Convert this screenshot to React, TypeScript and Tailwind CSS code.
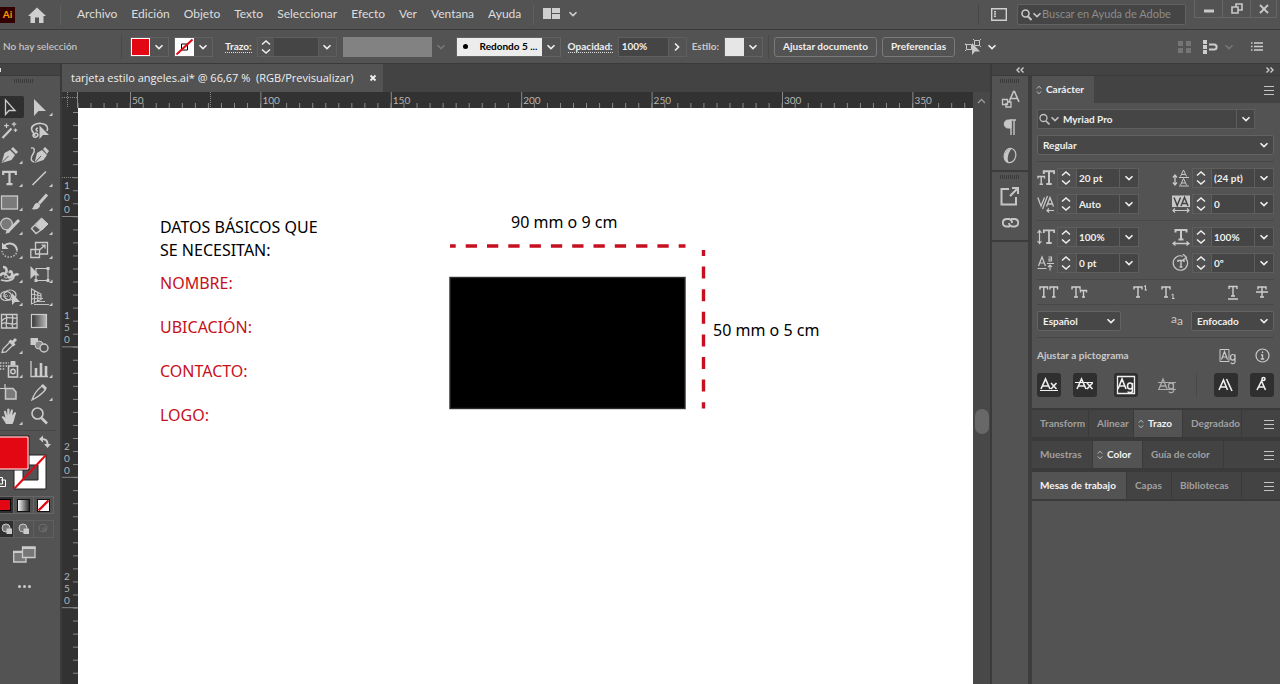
import React, {useEffect, useState} from 'react';

interface IconProps {
  children?: React.ReactNode;
  w?: number;
  h?: number;
  className?: string;
}

const Icon: React.FC<IconProps> = ({children, w = 20, h = 20, className = ''}) => (
  <svg
    width={w}
    height={h}
    viewBox={`0 0 ${w} ${h}`}
    fill="none"
    stroke="currentColor"
    aria-hidden="true"
    className={`shrink-0 ${className}`}
  >
    {children}
  </svg>
);

const Chevron: React.FC<{className?: string}> = ({className = ''}) => (
  <Icon w={10} h={8} className={className}>
    <path d="M1.5 2.2L5 5.6L8.5 2.2" strokeWidth="1.6"/>
  </Icon>
);

const Sorter: React.FC<{className?: string}> = ({className = ''}) => (
  <Icon w={6} h={10} className={className}>
    <path d="M0.8 3.6L3 1.2L5.2 3.6M0.8 6.4L3 8.8L5.2 6.4"/>
  </Icon>
);

const Grip = () => (
  <Icon w={20} h={4} className="text-[#3c3c3c]">
    <path d="M0 2H20" strokeWidth="4" strokeDasharray="1 1"/>
  </Icon>
);

const PanelMenu = () => (
  <button type="button" aria-label="Menú del panel" className="mr-[6px] ml-auto text-[#c4c4c4]">
    <Icon w={10} h={10}>
      <path d="M0 1.5H10M0 5.5H10M0 9.5H10"/>
    </Icon>
  </button>
);

const FIELD = 'flex h-5 items-stretch border border-[#5e5e5e] bg-[#454545]';

interface ToolType {
  name: string;
  more?: boolean;
  art: React.ReactNode;
}

const tools: ToolType[] = [
  {
    name: 'Selección',
    art: <path d="M5.5 5V19.5L9 15.5H15Z" strokeWidth="1.3"/>,
  },
  {
    name: 'Selección directa',
    more: true,
    art: <path d="M4 4V21L8.5 16H16Z" fill="currentColor" stroke="none"/>,
  },
  {
    name: 'Varita mágica',
    art: <>
      <path d="M2.5 19L11.5 9.5" strokeWidth="2.2"/>
      <path d="M6.5 4.5V9M4.2 6.7H8.8M14 3V7.5M11.8 5.2H16.2M15.5 9.5V13M13.7 11.2H17.3" strokeWidth="1.2"/>
    </>,
  },
  {
    name: 'Lazo',
    art: <>
      <path
        d="M4 14C1 12 0.5 8 4 6C8 3.5 15 4 17 7.5C18 9.5 17.5 11 17 12M4 14C1.8 16 3.5 19 6 18C9 17 8 13.5 5.5 14.2C4 14.6 4 16.5 5.5 16.3M8 12C5.5 12 5.5 9.5 8 9"
        strokeWidth="1.6"
      />
      <path d="M9.5 6.5V20L13 16H19Z" fill="currentColor" stroke="none"/>
    </>,
  },
  {
    name: 'Pluma',
    more: true,
    art: <>
      <path d="M1.5 20L4.5 10L10 7L15 12L11.5 17Z" fill="currentColor" stroke="none"/>
      <path d="M11 6L13 4L18 9L16 11Z" fill="currentColor" stroke="none"/>
      <path d="M2 19.5L8.5 13" stroke="#535353"/>
    </>,
  },
  {
    name: 'Curvatura',
    art: <>
      <path d="M4.5 20L7 10L12 7L17 12L13.5 17Z" fill="currentColor" stroke="none"/>
      <path d="M13 6L15 4L19 8L17 11Z" fill="currentColor" stroke="none"/>
      <path d="M5 19.5L11 13" stroke="#535353"/>
      <path d="M1 5C5 4 5 8 3 11C1 14 0 18 4 19" strokeWidth="1.4"/>
    </>,
  },
  {
    name: 'Texto',
    more: true,
    art: <path d="M3.2 9V5.8H15.8V9M9.5 5.8V18.2M6.5 18.2H12.5" strokeWidth="2.2"/>,
  },
  {
    name: 'Segmento de línea',
    more: true,
    art: <path d="M2.5 19L16 5.5" strokeWidth="1.6"/>,
  },
  {
    name: 'Rectángulo',
    more: true,
    art: <rect x="1.5" y="6" width="16" height="13" fill="#7a7a7a" strokeWidth="1.3"/>,
  },
  {
    name: 'Pincel',
    more: true,
    art: <>
      <path d="M9 13.5L17 4.5" strokeWidth="3"/>
      <path d="M1.5 19C4 18 3.5 14 6.5 13C9 12.5 11 15 9.5 17C8 19.5 4.5 20 1.5 19Z" fill="currentColor" stroke="none"/>
    </>,
  },
  {
    name: 'Shaper',
    more: true,
    art: <>
      <circle cx="6.5" cy="10" r="5.8" fill="#7a7a7a" strokeWidth="1.2"/>
      <path d="M7.5 18L19 6" strokeWidth="3"/>
      <path d="M5.5 20L7 15L10 18Z" fill="currentColor" stroke="none"/>
    </>,
  },
  {
    name: 'Borrador',
    more: true,
    art: <>
      <path d="M5.5 10L11.5 4L18 10L12 16Z" fill="currentColor"/>
      <path d="M5 11L1.5 14.5L6 19.5L11 16Z" strokeWidth="1.4"/>
    </>,
  },
  {
    name: 'Rotar',
    more: true,
    art: <>
      <path d="M4 8C8 3.5 16 5 17 12" strokeWidth="2"/>
      <path d="M2 4.5V11H8.5Z" fill="currentColor" stroke="none"/>
      <path d="M17 12C17 21 3 21.5 2 13" strokeWidth="1.3" strokeDasharray="1.5 1.5"/>
    </>,
  },
  {
    name: 'Escala',
    more: true,
    art: <>
      <path d="M5.5 4.5H17.5V16H5.5Z" strokeWidth="1.3"/>
      <path d="M0.8 11.5H9.5V19.5H0.8Z" strokeWidth="1.3"/>
      <path d="M9.5 12L14.5 7.5M11.5 7.2H15V10.5" strokeWidth="1.3"/>
    </>,
  },
  {
    name: 'Anchura',
    more: true,
    art: <>
      <path d="M3 5C7 5 7 9 6 11M0 14C2 10 5 11 7 14C9 17 13 15 12 11C11.5 8.5 9 9 10 11M12 14C14 16 15 10 18.5 13" strokeWidth="2.6"/>
      <path d="M1 18C6 19.5 12 19 14 15" strokeWidth="1.8"/>
      <circle cx="6" cy="14.5" r="1.6" fill="#535353"/>
    </>,
  },
  {
    name: 'Transformación libre',
    more: true,
    art: <>
      <path d="M6 6.5H18V18.5H6Z" strokeWidth="1.2"/>
      <path d="M16.5 5H19.5V8H16.5ZM16.5 17H19.5V20H16.5ZM4.5 17H7.5V20H4.5Z" fill="currentColor" stroke="none"/>
      <path d="M0.5 4V17L4 13.5H9.5Z" fill="currentColor" stroke="none"/>
    </>,
  },
  {
    name: 'Creador de formas',
    more: true,
    art: <>
      <ellipse cx="10" cy="10" rx="6" ry="5" strokeWidth="1.2"/>
      <ellipse cx="6" cy="11" rx="5.5" ry="4.5" strokeWidth="1.2"/>
      <path d="M1 11H11M6 7V15" strokeDasharray="1 1"/>
      <path d="M12 8V20L15 17H20Z" fill="currentColor" stroke="none"/>
    </>,
  },
  {
    name: 'Cuadrícula de perspectiva',
    more: true,
    art: <>
      <path d="M1.5 4V19L11 14.5V9ZM4.5 6V17.5M7.8 7.8V16M1.5 9L11 11M1.5 14L11 13" strokeWidth="1.1"/>
      <path d="M7 16.5H15M4 19.5H19M11 13.5H13" strokeWidth="0.9"/>
    </>,
  },
  {
    name: 'Malla',
    art: <>
      <path d="M1.5 5.5H17V19H1.5Z" strokeWidth="1.3"/>
      <path d="M1.5 12C6 6 12 10 17 9M1.5 15C6 11 11 18 17 14M6 5.5C9 10 4 14 7 19M12 5.5C15 10 10 14 13 19" strokeWidth="1.3"/>
    </>,
  },
  {
    name: 'Degradado',
    art: <rect x="1.5" y="5.5" width="15" height="13" fill="url(#toolFade)" strokeWidth="1.2"/>,
  },
  {
    name: 'Cuentagotas',
    more: true,
    art: <>
      <path d="M2 19.5L3 16L11 8L14 11L6 19Z" strokeWidth="1.3"/>
      <path d="M9.5 7.5L14.5 12.5M12 10L16 6" strokeWidth="3"/>
    </>,
  },
  {
    name: 'Fusión',
    art: <>
      <path d="M0.5 5H8V12H0.5Z" fill="currentColor" stroke="none"/>
      <circle cx="9" cy="12" r="4" fill="#8a8a8a"/>
      <circle cx="14" cy="15" r="4" fill="#535353" strokeWidth="1.4"/>
    </>,
  },
  {
    name: 'Rociar símbolos',
    more: true,
    art: <>
      <rect x="8.5" y="9" width="9" height="11" strokeWidth="1.6"/>
      <path d="M11 4.5H15V8H11Z" fill="currentColor"/>
      <circle cx="13" cy="14.5" r="2.2" strokeWidth="1.4"/>
      <path d="M0 6H9M0 9H7M0 12H5" strokeWidth="1.4" strokeDasharray="1.4 1.4"/>
    </>,
  },
  {
    name: 'Gráfica de columnas',
    more: true,
    art: <>
      <path d="M1 4V19.5H18" strokeWidth="1.3"/>
      <path d="M6 19V11M11 19V6M16 19V9" strokeWidth="2.6"/>
    </>,
  },
  {
    name: 'Mesa de trabajo',
    art: <>
      <path d="M5.5 8.5H13L16 12V19H5.5Z" fill="#7a7a7a" strokeWidth="1.5"/>
      <path d="M0 8.5H5M5 4V8" strokeWidth="1.2"/>
    </>,
  },
  {
    name: 'Sector',
    more: true,
    art: <>
      <path d="M2 20C4 14 8 9 12 6L15.5 9.5C12 14 8 17 2 20Z" strokeWidth="1.3"/>
      <path d="M11 5.5L13 4L17 8L15 10Z" fill="currentColor" stroke="none"/>
    </>,
  },
  {
    name: 'Mano',
    more: true,
    art: (
      <path
        d="M6 20C4.5 17 3 15 1.5 13C2.5 11.5 4 12 5.5 14L3.8 7.5C4.8 6.2 5.8 6.8 6.2 8L7.2 11.5V5.3C8 4.2 9.2 4.5 9.5 5.5V11L11 5.8C12 5 13 5.5 12.9 6.6L12.3 11.5L14.5 8.3C15.6 7.8 16.4 8.5 16 9.5C14.5 12.5 14.5 17 12.5 20Z"
        fill="currentColor"
        stroke="none"
      />
    ),
  },
  {
    name: 'Zoom',
    art: <>
      <circle cx="7.5" cy="9.5" r="5.5" strokeWidth="1.6"/>
      <path d="M11.5 14L17 19.5" strokeWidth="2.6"/>
    </>,
  },
];

const menus = ['Archivo', 'Edición', 'Objeto', 'Texto', 'Seleccionar', 'Efecto', 'Ver', 'Ventana', 'Ayuda'];

const MenuBar = () => (
  <header className="flex h-[30px] items-center border-b border-[#3a3a3a]">
    <div className="flex h-4 w-[15px] items-center justify-center bg-[#300] text-[10px] font-bold text-[#ff9a00]">Ai</div>
    <button type="button" aria-label="Inicio" className="ml-3 text-[#cfcfcf]">
      <Icon w={20} h={18}>
        <path d="M1 10L10 1.5L19 10H16.5V17H12V11.5H8V17H3.5V10Z" fill="currentColor" stroke="none"/>
      </Icon>
    </button>
    <div className="ml-[13px] h-5 w-px bg-[#5f5f5f]"/>
    <nav className="ml-4 flex gap-[14px] pb-[2px] text-xs leading-4 text-[#dedede]">
      {menus.map((menu) => (
        <button key={menu} type="button">{menu}</button>
      ))}
    </nav>
    <div className="ml-3 h-5 w-px bg-[#5f5f5f]"/>
    <button type="button" aria-label="Espacio de trabajo" className="ml-[9px] flex items-center gap-2 pb-[2px] text-[#cfcfcf]">
      <Icon w={17} h={11}>
        <path d="M0 0H8V11H0ZM9 0H17V5H9ZM9 6H17V11H9Z" fill="currentColor" stroke="none"/>
      </Icon>
      <Chevron/>
    </button>
    <div className="ml-auto h-5 w-px bg-[#454545]"/>
    <button type="button" aria-label="Organizar documentos" className="ml-3 text-[#d0d0d0]">
      <Icon w={16} h={13}>
        <path d="M0.7 0.7H15.3V12.3H0.7Z" strokeWidth="1.4"/>
        <path d="M4 3V10" strokeWidth="2" strokeDasharray="1.5 0.8"/>
      </Icon>
    </button>
    <label className="ml-[10px] flex h-[21px] w-[169px] items-center rounded-[2px] border border-[#626262] bg-[#454545] pl-[3px] text-[#c8c8c8]">
      <Icon w={11} h={12}>
        <circle cx="4.5" cy="4.5" r="3.5" strokeWidth="1.6"/>
        <path d="M7 7.5L10.5 11" strokeWidth="2"/>
      </Icon>
      <Chevron/>
      <input
        type="search"
        aria-label="Buscar en Ayuda de Adobe"
        placeholder="Buscar en Ayuda de Adobe"
        className="min-w-0 flex-1 text-[11px] outline-none placeholder:text-[#8c8c8c]"
      />
    </label>
    <div className="mr-[3px] ml-2 flex h-[18px] divide-x divide-[#666] self-start border border-t-0 border-[#666] text-[#c8c8c8]">
      <button type="button" aria-label="Minimizar" className="flex w-7 items-center justify-center">
        <Icon w={10} h={12}><path d="M0 8H10" strokeWidth="3"/></Icon>
      </button>
      <button type="button" aria-label="Restaurar" className="flex w-7 items-center justify-center">
        <Icon w={12} h={11}><path d="M5 3.5V1H11V7H7.5M1 4H7V10H1Z" strokeWidth="1.6"/></Icon>
      </button>
      <button type="button" aria-label="Cerrar" className="flex w-[25px] items-center justify-center">
        <Icon w={10} h={10}><path d="M1 1L9 9M9 1L1 9" strokeWidth="1.8"/></Icon>
      </button>
    </div>
  </header>
);

const DropButton: React.FC<{label: string; className?: string}> = ({label, className = ''}) => (
  <button
    type="button"
    aria-label={label}
    className={`flex w-[18px] shrink-0 items-center justify-center ${className}`}
  >
    <Chevron/>
  </button>
);

const Stepper = () => (
  <Icon w={10} h={18}>
    <path d="M1 6.5L5 3L9 6.5M1 11.5L5 15L9 11.5" strokeWidth="1.5"/>
  </Icon>
);

const ControlBar = () => (
  <div className="flex h-[34px] items-center border-b border-[#3a3a3a] text-[10px] font-bold whitespace-nowrap text-[#f0f0f0]">
    <span className="w-[121px] pl-[3px] font-medium text-[#cacaca]">No hay selección</span>
    <div className="h-6 w-px bg-[#484848]"/>
    <div className="ml-2 flex h-5 border border-[#626262]">
      <button type="button" aria-label="Relleno" className="w-[19px] border border-white bg-[#e30613]"/>
      <DropButton label="Opciones de relleno"/>
    </div>
    <div className="ml-[5px] flex h-5 border border-[#626262]">
      <button type="button" aria-label="Trazo" className="w-[19px] bg-white text-black">
        <Icon w={19} h={18}>
          <path d="M6.5 6H12.5V12H6.5Z"/>
          <path d="M1.5 16.5L17.5 1.5" stroke="#e30613" strokeWidth="2"/>
        </Icon>
      </button>
      <DropButton label="Opciones de trazo"/>
    </div>
    <label htmlFor="stroke-width" className="ml-3 border-b border-dotted border-[#ddd] leading-3">Trazo:</label>
    <div className={`ml-[5px] w-20 ${FIELD}`}>
      <button type="button" aria-label="Cambiar grosor" className="w-4 shrink-0 bg-[#535353] px-[3px]"><Stepper/></button>
      <input id="stroke-width" className="min-w-0 flex-1 px-1 outline-none"/>
      <DropButton label="Grosores" className="border-l border-[#5e5e5e] bg-[#535353]"/>
    </div>
    <div className="ml-[6px] flex h-5">
      <div className="w-[89px] bg-[#828282]"/>
      <DropButton label="Perfil de anchura" className="text-[#777]"/>
    </div>
    <div className="ml-[6px] flex h-5 border border-[#626262]">
      <button type="button" className="flex w-[85px] items-center bg-[#ececec] pl-[6px] text-black">
        <span className="mr-3 size-[5px] shrink-0 rounded-full bg-black"/>
        Redondo 5 ...
      </button>
      <DropButton label="Pinceles"/>
    </div>
    <label htmlFor="opacity" className="ml-[7px] border-b border-dotted border-[#ddd] leading-3">Opacidad:</label>
    <div className={`ml-[5px] w-[69px] ${FIELD}`}>
      <input id="opacity" defaultValue="100%" className="min-w-0 flex-1 pl-[3px] outline-none"/>
      <button type="button" aria-label="Ajustar opacidad" className="flex w-[18px] items-center justify-center border-l border-[#5e5e5e] bg-[#535353]">
        <Icon w={8} h={10}><path d="M2 1.5L5.6 5L2 8.5" strokeWidth="1.6"/></Icon>
      </button>
    </div>
    <span className="ml-[5px] text-[#cacaca]">Estilo:</span>
    <div className="ml-[5px] flex h-5 border border-[#626262]">
      <button type="button" aria-label="Estilo gráfico" className="w-[19px] bg-[#e6e6e6]"/>
      <DropButton label="Estilos gráficos"/>
    </div>
    <div className="ml-[5px] h-6 w-px bg-[#484848]"/>
    <button type="button" className="ml-[5px] h-5 w-[103px] rounded-[3px] border border-[#7a7a7a]">
      Ajustar documento
    </button>
    <button type="button" className="ml-[5px] h-5 w-[73px] rounded-[3px] border border-[#7a7a7a]">
      Preferencias
    </button>
    <button type="button" aria-label="Seleccionar objetos similares" className="ml-[10px] flex items-center gap-[6px]">
      <Icon w={16} h={17} className="text-[#c8c8c8]">
        <path d="M1.5 6.5H6.5V11.5H1.5ZM9.5 2.5H14.5V7.5H9.5ZM0 5V6.5H1.5M0 13L1.5 11.5M8 1L9.5 2.5M16 1L14.5 2.5M16 9L14.5 7.5"/>
        <path d="M7 5V17L10 13.5H15Z" fill="currentColor" stroke="none"/>
      </Icon>
      <Chevron/>
    </button>
    <div className="ml-auto flex items-center pr-[17px]">
      <Icon w={13} h={12} className="text-[#757575]">
        <path d="M0 0H5V5H0ZM8 0H13V5H8ZM0 7H5V12H0ZM8 7H13V12H8Z" fill="currentColor" stroke="none"/>
      </Icon>
      <button type="button" aria-label="Ajustar a píxel" className="ml-3 flex items-center gap-[6px] text-[#cdcdcd]">
        <Icon w={15} h={14}>
          <path d="M0 0H4V4H0ZM0 5H4V9H0ZM0 10H4V14H0Z" fill="currentColor" stroke="none"/>
          <path d="M6 4.5H11C14.5 4.5 14.5 9.5 11 9.5H6" strokeWidth="2"/>
        </Icon>
        <Chevron className="text-[#777]"/>
      </button>
      <button type="button" aria-label="Menú de control" className="ml-[17px] text-[#cdcdcd]">
        <Icon w={12} h={9}>
          <path d="M3 1H12M3 4.5H12M3 8H12M0 1H1.5M0 4.5H1.5M0 8H1.5" strokeWidth="1.3"/>
        </Icon>
      </button>
    </div>
  </div>
);

const Toolbox = () => {
  const [active, setActive] = useState('Selección');

  return (
    <aside className="flex w-[62px] shrink-0 flex-col border-r-2 border-[#3a3a3a] text-[#cbcbcb]">
      <div className="h-3 border-b border-[#3a3a3a] bg-[#434343]">
        <div className="mt-1 h-1 w-px bg-[#ddd]"/>
      </div>
      <div className="flex h-5 pt-[3px] pl-[14px]"><Grip/></div>
      <svg width="0" height="0" className="absolute" aria-hidden="true">
        <linearGradient id="toolFade">
          <stop offset="0" stopColor="#333"/>
          <stop offset="1" stopColor="#bbb"/>
        </linearGradient>
        <linearGradient id="swatchFade">
          <stop offset="0" stopColor="#fff"/>
          <stop offset="1" stopColor="#222"/>
        </linearGradient>
      </svg>
      <div className="grid h-[333px] grid-cols-[30px_30px] grid-rows-14">
        {tools.map((tool) => (
          <button
            key={tool.name}
            type="button"
            aria-label={tool.name}
            onClick={() => setActive(tool.name)}
            className={`flex h-[22px] w-6 items-center rounded-r-[2px] ${active === tool.name ? 'bg-[#2f2f2f]' : ''}`}
          >
            <Icon w={24} h={24}>
              {tool.art}
              {tool.more && <path d="M22.5 17.5V21H19Z" fill="currentColor" stroke="none"/>}
            </Icon>
          </button>
        ))}
      </div>
      <div className="mt-px mr-1 h-px bg-[#484848]"/>
      <Icon w={56} h={61} className="mt-1">
        <path d="M14 20H46V54H14Z" fill="#fff" stroke="#222"/>
        <path d="M23 30H38V45H23Z" fill="#535353" stroke="#222"/>
        <path d="M14.5 53.5L45.5 20.5" stroke="#e30613" strokeWidth="2"/>
        <path d="M-1 1H29V35H-1Z" fill="#e30613" stroke="#222"/>
        <path d="M-1 2H28V34H-1Z" stroke="#fff"/>
        <path d="M42 4C46 4 47.5 6 47.5 9" strokeWidth="2"/>
        <path d="M39 4L43 0.5V7.5ZM47.5 13L44 9H51Z" fill="currentColor" stroke="none"/>
        <path d="M-2 42.5H2.5V49H-2M1 45H5.5V51.5H-1" stroke="#fff"/>
      </Icon>
      <div className="flex">
        <button type="button" aria-label="Color" className="flex h-[18px] w-[14px] items-center border border-l-0 border-[#666] bg-[#2f2f2f]">
          <span className="h-3 w-[11px] border border-l-0 border-black bg-[#e30613]"/>
        </button>
        <button type="button" aria-label="Degradado" className="flex h-[18px] w-5 items-center justify-center border border-l-0 border-[#666]">
          <Icon w={13} h={13}><rect x="0.5" y="0.5" width="12" height="12" fill="url(#swatchFade)" stroke="#111"/></Icon>
        </button>
        <button type="button" aria-label="Ninguno" className="flex h-[18px] w-5 items-center justify-center border border-l-0 border-[#666]">
          <Icon w={13} h={13}>
            <rect x="0.5" y="0.5" width="12" height="12" fill="#fff" stroke="#111"/>
            <path d="M1.5 11.5L11.5 1.5" stroke="#e30613" strokeWidth="2.4"/>
          </Icon>
        </button>
      </div>
      <div className="mt-[6px] flex">
        {['Dibujo normal', 'Dibujar detrás', 'Dibujar dentro'].map((mode, index) => (
          <button
            key={mode}
            type="button"
            aria-label={mode}
            className={`flex h-[18px] items-center justify-center border border-l-0 border-[#606060] ${index === 0 ? 'w-[14px] bg-[#2f2f2f]' : 'w-5'} ${index === 2 ? 'text-[#6c6c6c]' : ''}`}
          >
            <Icon w={12} h={12}>
              <circle cx="5" cy="5" r="4" fill={index === 2 ? 'none' : '#777'}/>
              {index === 2
                ? <path d="M5 5H7.5V7.5H5Z"/>
                : <path d="M5.5 5.5H11V11H5.5Z" fill="currentColor" stroke="none"/>}
            </Icon>
          </button>
        ))}
      </div>
      <button type="button" aria-label="Modo de pantalla" className="mt-2 ml-[13px] w-[23px]">
        <Icon w={23} h={17}>
          <path d="M0.7 5.5H13V16H0.7Z" fill="#777" strokeWidth="1.3"/>
          <path d="M9.5 1H22V11.5H9.5Z" fill="#777" strokeWidth="1.3"/>
          <path d="M9 2H22.5M0 6H9" strokeWidth="2"/>
        </Icon>
      </button>
      <button type="button" aria-label="Editar barra de herramientas" className="mt-[22px] ml-[18px] flex gap-[2px]">
        <span className="size-[3px] rounded-full bg-[#cbcbcb]"/>
        <span className="size-[3px] rounded-full bg-[#cbcbcb]"/>
        <span className="size-[3px] rounded-full bg-[#cbcbcb]"/>
      </button>
    </aside>
  );
};

// ruler scale: 50 mm of the document are 130.4 px on screen at 66,67 %
const STEP = 130.4;

// space taken by the bars and panels around the canvas
const SIDE_SPACE = 385;
const TOP_SPACE = 108;

const useCanvasSize = () => {
  const [size, setSize] = useState({width: window.innerWidth - SIDE_SPACE, height: window.innerHeight - TOP_SPACE});

  useEffect(() => {
    const onResize = () => setSize({
      width: window.innerWidth - SIDE_SPACE,
      height: window.innerHeight - TOP_SPACE,
    });
    window.addEventListener('resize', onResize);
    return () => window.removeEventListener('resize', onResize);
  }, []);

  return size;
};

const range = (length: number) => Array.from({length: Math.max(0, Math.floor(length))}, (_, i) => i);

const TopRuler: React.FC<{width: number}> = ({width}) => (
  <svg className="h-4 min-w-0 flex-1 bg-[#323232] text-[10px]" stroke="#8a8a8a" aria-hidden="true">
    {range((width * 10) / STEP + 1).map((i) => <path key={i} d={`M${(i * STEP) / 10} 11V16`}/>)}
    {range((width - 75) / STEP + 1).map((i) => (
      <g key={i}>
        <path d={`M${52.5 + i * STEP} 0V16`}/>
        <text x={54 + i * STEP} y="12" fill="#b5b5b5" stroke="none">{50 + i * 50}</text>
      </g>
    ))}
    <path d="M132.5 0V16" strokeDasharray="1 1"/>
  </svg>
);

const SideRuler: React.FC<{height: number}> = ({height}) => (
  <svg className="h-full w-4 shrink-0 bg-[#323232] text-[10px]" stroke="#8a8a8a" aria-hidden="true">
    {range((height * 10) / STEP + 1).map((i) => <path key={i} d={`M11 ${4.5 + (i * STEP) / 10}H16`}/>)}
    {range((height - 108) / STEP + 1).map((i) => (
      <g key={i}>
        <path d={`M0 ${108.5 + i * STEP}H16`}/>
        {String(100 + i * 50).split('').map((digit, n) => (
          <text key={n} x="2" y={81 + n * 12 + i * STEP} fill="#b5b5b5" stroke="none">{digit}</text>
        ))}
      </g>
    ))}
    <path d="M0 69.5H16" strokeDasharray="1 1"/>
  </svg>
);

const Artwork = () => (
  <main className="relative min-w-0 flex-1 overflow-hidden bg-white font-['Noto_Sans','Open_Sans',sans-serif] text-base leading-[23px] whitespace-nowrap text-black">
    <p className="absolute top-[108px] left-[82px]">DATOS BÁSICOS QUE<br/>SE NECESITAN:</p>
    <p className="absolute top-[164px] left-[82px] text-[#c61020]">NOMBRE:</p>
    <p className="absolute top-[208px] left-[82px] text-[#c61020]">UBICACIÓN:</p>
    <p className="absolute top-[252px] left-[82px] text-[#c61020]">CONTACTO:</p>
    <p className="absolute top-[296px] left-[82px] text-[#c61020]">LOGO:</p>
    <p className="absolute top-[103px] left-[433px]">90 mm o 9 cm</p>
    <p className="absolute top-[211px] left-[635px]">50 mm o 5 cm</p>
    <svg className="absolute top-[136px] left-[371px]" width="258" height="166" aria-hidden="true">
      <rect x="1" y="33.5" width="235" height="131" fill="#000" stroke="#2b2b2b" strokeWidth="1.4"/>
      <path d="M1 2H236.5" stroke="#c61020" strokeWidth="3.4" strokeDasharray="11.3 10" strokeDashoffset="5.6"/>
      <path d="M254.5 6V164.5" stroke="#c61020" strokeWidth="3.4" strokeDasharray="12 10.6" strokeDashoffset="6"/>
    </svg>
  </main>
);

const Document = () => {
  const {width, height} = useCanvasSize();

  return (
    <section className="flex min-w-0 flex-1 flex-col bg-[#434343]">
      <div className="flex h-7 shrink-0">
        <div className="flex w-[321px] items-center bg-[#535353] pl-[9px] font-['Open_Sans','Noto_Sans',sans-serif] text-[11px] font-medium text-[#f0f0f0]">
          <span className="flex-1 whitespace-pre">{'tarjeta estilo angeles.ai* @ 66,67 %  (RGB/Previsualizar)'}</span>
          <button type="button" aria-label="Cerrar documento" className="mr-[6px]">
            <Icon w={8} h={8}><path d="M1.5 1.5L6.5 6.5M6.5 1.5L1.5 6.5" strokeWidth="1.8"/></Icon>
          </button>
        </div>
      </div>
      <div className="flex min-h-0 flex-1">
        <div className="flex min-w-0 flex-1 flex-col">
          <div className="flex h-4 shrink-0">
            <Icon w={16} h={16} className="bg-[#323232] text-[#8a8a8a]">
              <path d="M5.5 0V16M0 5.5H16" strokeDasharray="1 1"/>
              <path d="M15.5 0V16"/>
            </Icon>
            <TopRuler width={width}/>
          </div>
          <div className="flex min-h-0 flex-1">
            <SideRuler height={height}/>
            <Artwork/>
          </div>
        </div>
        <div className="flex w-[17px] shrink-0 flex-col items-center bg-[#484848] pt-[6px] text-[#9a9a9a]">
          <Icon w={9} h={6}><path d="M1 5L4.5 1.5L8 5" strokeWidth="1.3"/></Icon>
          <div className="mt-[305px] h-[25px] w-[14px] rounded-full bg-[#686868]"/>
        </div>
      </div>
    </section>
  );
};

const IconStrip = () => (
  <div className="flex w-9 shrink-0 flex-col text-[#c6c6c6]">
    <div className="flex h-24 flex-col items-center border-b-2 border-[#3c3c3c] pt-[3px]">
      <Grip/>
      <div className="mt-[7px] flex flex-col items-center gap-[11px]">
        <button type="button" aria-label="Estilos de carácter">
          <Icon w={19} h={18}>
            <path d="M8 12L12.5 1.5H13.5L18 12M9.5 8.5H16.5" strokeWidth="1.6"/>
            <path d="M1.5 9.5H6.5V14.5H1.5ZM5 13V17H10V12H7" strokeWidth="1.3"/>
          </Icon>
        </button>
        <button type="button" aria-label="Párrafo">
          <Icon w={14} h={17}>
            <path d="M8 1H5C0 1 0 9 5 9H8Z" fill="currentColor"/>
            <path d="M8 1V16M11 1V16M7 1H13" strokeWidth="1.4"/>
          </Icon>
        </button>
        <button type="button" aria-label="OpenType">
          <Icon w={14} h={17}>
            <ellipse cx="7" cy="8.5" rx="5.8" ry="7.2" transform="rotate(14 7 8.5)" strokeWidth="1.2"/>
            <path d="M9 1.2C3 2 -0.5 9 2 13.5C3 15.3 4.5 16 6 15.8C3 12 6 4 9 1.2Z" fill="currentColor" stroke="none"/>
          </Icon>
        </button>
      </div>
    </div>
    <div className="flex h-[70px] flex-col items-center border-b-2 border-[#3c3c3c] pt-[3px]">
      <Grip/>
      <div className="mt-[7px] flex flex-col items-center gap-[11px]">
        <button type="button" aria-label="Exportar recursos">
          <Icon w={20} h={20}>
            <path d="M9 3H1.5V18.5H16V11" strokeWidth="2"/>
            <path d="M10 10L17.5 2.5M12 2H18V8" strokeWidth="2"/>
          </Icon>
        </button>
        <button type="button" aria-label="Vínculos">
          <Icon w={19} h={12}>
            <path d="M9 9.5H5A3.8 3.8 0 0 1 5 2H8A3.8 3.8 0 0 1 11 6M10 2H14A3.8 3.8 0 0 1 14 9.5H11A3.8 3.8 0 0 1 8 6" strokeWidth="1.8"/>
          </Icon>
        </button>
      </div>
    </div>
  </div>
);

interface ComboProps {
  id: string;
  label: string;
  value: string;
  art: React.ReactNode;
}

const Combo: React.FC<ComboProps> = ({id, label, value, art}) => (
  <div className="flex items-center gap-[2px]">
    <label htmlFor={id} aria-label={label} className="text-[#c8c8c8]">
      <Icon w={18} h={18}>{art}</Icon>
    </label>
    <div className={`w-[82px] ${FIELD}`}>
      <button type="button" aria-label={`Cambiar ${label}`} className="w-[18px] shrink-0 bg-[#505050] px-[3px]"><Stepper/></button>
      <input id={id} defaultValue={value} className="min-w-0 flex-1 border-x border-[#5e5e5e] pl-[2px] outline-none"/>
      <DropButton label={`Valores de ${label}`}/>
    </div>
  </div>
);

const combos: ComboProps[][] = [
  [
    {
      id: 'font-size', label: 'Tamaño de fuente', value: '20 pt',
      art: <>
        <path d="M6.8 5V2.2H17.2V5M12 2.2V15M9.3 15H14.7" strokeWidth="2"/>
        <path d="M1 9.5V7.5H7.5V9.5M4.2 7.5V15.2M2.5 15.2H6" strokeWidth="1.4"/>
      </>,
    },
    {
      id: 'leading', label: 'Interlineado', value: '(24 pt)',
      art: <>
        <path d="M8.5 7.5L11.5 1L14.5 7.5M9.5 5.5H13.5M7 8.5H17M8.5 16L11.5 9.5L14.5 16M9.5 14H13.5M7 17H17"/>
        <path d="M3 7V15M1 8.5L3 6L5 8.5M1 13.5L3 16L5 13.5" strokeWidth="1.3"/>
      </>,
    },
  ],
  [
    {
      id: 'kerning', label: 'Kerning', value: 'Auto',
      art: <>
        <path d="M0.8 2.5L4 11L7.5 2.5M5.5 14L10.5 1M9.5 11.5L13 2.5L16.5 11.5M10.5 9H15.5" strokeWidth="1.3"/>
        <path d="M17 15.5H10M12 13.5L10 15.5L12 17.5" strokeWidth="1.2"/>
      </>,
    },
    {
      id: 'tracking', label: 'Tracking', value: '0',
      art: <>
        <path d="M0 0.5H18V12H0Z" fill="currentColor" stroke="none"/>
        <path d="M2 2.5L5.2 10.5L8.5 2.5M9 11L12.5 2.5L16 11M10.5 8.5H14.5" stroke="#444" strokeWidth="1.5"/>
        <path d="M1 15.5H17M3 13.5L1 15.5L3 17.5M15 13.5L17 15.5L15 17.5" strokeWidth="1.2"/>
      </>,
    },
  ],
  [
    {
      id: 'vertical-scale', label: 'Escala vertical', value: '100%',
      art: <>
        <path d="M6.8 5V2.4H17.2V5M12 2.4V15M9.3 15H14.7" strokeWidth="1.8"/>
        <path d="M2.5 3V15M0.5 5L2.5 2.5L4.5 5M0.5 13L2.5 15.5L4.5 13" strokeWidth="1.2"/>
      </>,
    },
    {
      id: 'horizontal-scale', label: 'Escala horizontal', value: '100%',
      art: <>
        <path d="M3.5 4.5V2H14.5V4.5M9 2V11.5M6.5 11.5H11.5" strokeWidth="2"/>
        <path d="M1 15.5H17M3.5 13.5L1 15.5L3.5 17.5M14.5 13.5L17 15.5L14.5 17.5" strokeWidth="1.3"/>
      </>,
    },
  ],
  [
    {
      id: 'baseline', label: 'Desplazamiento vertical', value: '0 pt',
      art: <>
        <path d="M1.5 12L5 3L8.5 12M3 9H7M0.5 14.5H9.5" strokeWidth="1.2"/>
        <path d="M11.5 3H14.5V7H12V5H14.5M10 9.5H17M13 16.5V11M11 13L13 11L15 13" strokeWidth="1.1"/>
      </>,
    },
    {
      id: 'rotation', label: 'Rotación de caracteres', value: '0º',
      art: <>
        <path d="M14 4.5A7.2 7.2 0 1 1 11 2.3M11 0L14.5 3.5L11 6" strokeWidth="1.2"/>
        <path d="M6 8V6.5H12V8M9 6.5V13M7.5 13H10.5" strokeWidth="1.4"/>
      </>,
    },
  ],
];

const Rule = () => <hr className="border-[#484848]"/>;

const GlyphButton: React.FC<{label: string; dark?: boolean; children: React.ReactNode}> = ({label, dark, children}) => (
  <button
    type="button"
    aria-label={label}
    className={`flex size-6 items-center justify-center rounded-[3px] ${dark ? 'bg-[#2f2f2f] text-[#f0f0f0]' : 'text-[#aaa]'}`}
  >
    <Icon w={20} h={20}>{children}</Icon>
  </button>
);

const A_X = 'M2 14L6.5 4L11 14M3.5 11H9.5M12 8L17.5 14M17.5 8L12 14';
const A_G = 'M2 14L6 4L10 14M3.5 11H8.5M16.5 8V16C16.5 18 12 18 12 16.5M16.5 11C16.5 7 11.5 7 11.5 11C11.5 15 16.5 15 16.5 11';

const Select: React.FC<{label: string; value: string; className: string}> = ({label, value, className}) => (
  <div className={`relative flex h-5 items-center rounded-[2px] border border-[#636363] bg-[#474747] ${className}`}>
    <select aria-label={label} className="size-full appearance-none pl-[5px] outline-none">
      <option>{value}</option>
    </select>
    <Chevron className="pointer-events-none absolute right-1"/>
  </div>
);

const CharacterPanel = () => (
  <section className="flex flex-col text-[10px] font-bold text-[#f0f0f0]">
    <div className="flex h-[27px] items-center bg-[#434343]">
      <button type="button" className="flex h-full w-[62px] items-center gap-1 bg-[#535353] pl-1">
        <Sorter className="text-[#bbb]"/>Carácter
      </button>
      <PanelMenu/>
    </div>
    <div className="flex flex-col pt-[6px] pr-[6px] pl-[5px]">
      <div className={`mr-[19px] ${FIELD}`}>
        <span className="flex items-center pl-px text-[#c0c0c0]">
          <Icon w={11} h={12}>
            <circle cx="4.5" cy="5" r="3.5" strokeWidth="1.3"/>
            <path d="M7 8L10.5 11.5" strokeWidth="1.6"/>
          </Icon>
          <Chevron/>
        </span>
        <input aria-label="Familia de fuentes" defaultValue="Myriad Pro" className="min-w-0 flex-1 pl-[3px] outline-none"/>
        <DropButton label="Familias" className="border-l border-[#5e5e5e]"/>
      </div>
      <Select label="Estilo de fuente" value="Regular" className="my-[6px]"/>
      <Rule/>
      {[combos.slice(0, 2), combos.slice(2)].map((group, index) => (
        <React.Fragment key={index}>
          <div className="flex flex-col gap-[6px] py-[6px]">
            {group.map((pair) => (
              <div key={pair[0].id} className="flex justify-between">
                {pair.map((combo) => <Combo key={combo.id} {...combo}/>)}
              </div>
            ))}
          </div>
          <Rule/>
        </React.Fragment>
      ))}
      <div className="flex h-6 items-center pr-[6px] pl-[2px] text-[#cfcfcf]">
        <button type="button" aria-label="Todo mayúsculas">
          <Icon w={20} h={16}>
            <path d="M1 5.5V3H8.5V5.5M4.8 3V13M3 13H6.5M11 5.5V3H18.5V5.5M14.8 3V13M13 13H16.5" strokeWidth="1.4"/>
          </Icon>
        </button>
        <button type="button" aria-label="Versalitas" className="ml-3">
          <Icon w={18} h={16}>
            <path d="M1 5.5V3H9V5.5M5 3V13M3 13H7M9.5 8.5V6.5H15.5V8.5M12.5 6.5V13M11 13H14" strokeWidth="1.4"/>
          </Icon>
        </button>
        <button type="button" aria-label="Superíndice" className="ml-auto">
          <Icon w={16} h={16}>
            <path d="M1 5.5V3H9V5.5M5 3V13M3 13H7" strokeWidth="1.4"/>
            <path d="M11 2.5L12.5 1.5V6M11.5 6H14"/>
          </Icon>
        </button>
        <button type="button" aria-label="Subíndice" className="ml-3">
          <Icon w={16} h={16}>
            <path d="M1 5.5V3H9V5.5M5 3V13M3 13H7" strokeWidth="1.4"/>
            <path d="M10.5 11L12 10V14.5M11 14.5H13.5"/>
          </Icon>
        </button>
        <button type="button" aria-label="Subrayado" className="ml-[50px]">
          <Icon w={12} h={16}>
            <path d="M2 5V2.5H10V5M6 2.5V12M4 12H8M1 15H11" strokeWidth="1.4"/>
          </Icon>
        </button>
        <button type="button" aria-label="Tachado" className="ml-[17px]">
          <Icon w={12} h={16}>
            <path d="M2 5.5V3H10V5.5M6 3V13M4 13H8M0 8H12" strokeWidth="1.4"/>
          </Icon>
        </button>
      </div>
      <Rule/>
      <div className="flex py-[6px]">
        <Select label="Idioma" value="Español" className="w-[84px]"/>
        <span className="mr-2 ml-auto flex text-xs font-normal text-[#c8c8c8]">
          <span className="leading-4">a</span>
          <span className="leading-5">a</span>
        </span>
        <Select label="Suavizado" value="Enfocado" className="w-[83px]"/>
      </div>
      <Rule/>
      <div className="flex h-[35px] items-center text-[#cacaca]">
        <span>Ajustar a pictograma</span>
        <button type="button" aria-label="Opciones de pictograma" className="ml-auto">
          <Icon w={18} h={18}>
            <path d="M1 2.5H10V14.5H1Z"/>
            <path d="M2.5 12.5L5.5 4.5L8.5 12.5M3.5 10H7.5M16 7.5V15C16 17 12 17 12 15.5M16 10.5C16 6.5 11.5 6.5 11.5 10.5C11.5 14 16 14 16 10.5" strokeWidth="1.2"/>
          </Icon>
        </button>
        <button type="button" aria-label="Información" className="mr-1 ml-[18px]">
          <Icon w={15} h={15}>
            <circle cx="7.5" cy="7.5" r="6.5" strokeWidth="1.2"/>
            <path d="M7.5 3.5V5M6 7H7.5V11M5.8 11H9.2" strokeWidth="1.3"/>
          </Icon>
        </button>
      </div>
      <div className="flex h-[35px] items-start">
        <GlyphButton label="Línea de base" dark>
          <path d={A_X} strokeWidth="1.6"/><path d="M1 15.5H19"/>
        </GlyphButton>
        <div className="w-3"/>
        <GlyphButton label="Altura x" dark>
          <path d={A_X} strokeWidth="1.6"/><path d="M0 7.5H18"/>
        </GlyphButton>
        <div className="w-[17px]"/>
        <GlyphButton label="Límites de pictograma" dark>
          <path d="M1.5 1.5H18.5V18.5H1.5Z" strokeWidth="1.3"/><path d={A_G} strokeWidth="1.6"/>
        </GlyphButton>
        <div className="w-[17px]"/>
        <GlyphButton label="Guías de proximidad">
          <path d={A_G} strokeWidth="1.3"/><path d="M1 7.5H19M1 14.5H19"/>
        </GlyphButton>
        <div className="mx-auto h-6 w-px bg-[#484848]"/>
        <GlyphButton label="Guías angulares" dark>
          <path d="M3 15L7.5 5L11.5 15M4.5 12H10M10.5 4L16 16" strokeWidth="1.6"/>
        </GlyphButton>
        <div className="w-3"/>
        <GlyphButton label="Punto de ancla" dark>
          <path d="M5 15L9.5 6L13.5 15M6.5 12H12M10 4C10 2 13 2 13 4C13 6 10 6 10 4" strokeWidth="1.6"/>
        </GlyphButton>
      </div>
    </div>
  </section>
);

interface TabType {
  name: string;
  width: string;
  open?: boolean;
  sorter?: boolean;
}

const groups: TabType[][] = [
  [
    {name: 'Transform', width: 'w-[57px] pl-2'},
    {name: 'Alinear', width: 'w-[45px] pl-2'},
    {name: 'Trazo', width: 'w-[49px] pl-1', open: true, sorter: true},
    {name: 'Degradado', width: 'w-[59px] pl-2'},
  ],
  [
    {name: 'Muestras', width: 'w-[61px] pl-2'},
    {name: 'Color', width: 'w-[50px] pl-1', open: true, sorter: true},
    {name: 'Guía de color', width: 'w-[81px] pl-2'},
  ],
  [
    {name: 'Mesas de trabajo', width: 'w-[95px] pl-2', open: true},
    {name: 'Capas', width: 'w-[45px] pl-2'},
    {name: 'Bibliotecas', width: 'w-[70px] pl-2'},
  ],
];

const Panels = () => (
  <div className="flex min-w-0 flex-1 flex-col border-l-4 border-[#3d3d3d]">
    <CharacterPanel/>
    {groups.map((tabs, index) => (
      <div key={index} className="flex h-[31px] shrink-0 items-center border-y-2 border-[#3a3a3a] bg-[#434343]">
        {tabs.map((tab) => (
          <button
            key={tab.name}
            type="button"
            className={`flex h-full shrink-0 items-center gap-1 border-r border-[#3a3a3a] text-[10px] font-bold whitespace-nowrap ${tab.width} ${tab.open ? 'bg-[#535353] text-[#f4f4f4]' : 'text-[#a0a0a0]'}`}
          >
            {tab.sorter && <Sorter className="text-[#bbb]"/>}
            {tab.name}
          </button>
        ))}
        <PanelMenu/>
      </div>
    ))}
  </div>
);

const App = () => (
  <div className="flex h-screen flex-col overflow-hidden bg-[#535353] font-['Lato','Open_Sans',sans-serif]">
    <MenuBar/>
    <ControlBar/>
    <div className="flex min-h-0 flex-1">
      <Toolbox/>
      <Document/>
      <aside className="flex w-[290px] shrink-0 flex-col border-l-2 border-[#3a3a3a]">
        <div className="flex h-3 shrink-0 items-center border-b border-[#3a3a3a] bg-[#434343] text-[#d0d0d0]">
          <button type="button" aria-label="Contraer iconos" className="ml-6">
            <Icon w={8} h={6}><path d="M3.5 0.5L1 3L3.5 5.5M7.5 0.5L5 3L7.5 5.5" strokeWidth="1.4"/></Icon>
          </button>
          <button type="button" aria-label="Contraer paneles" className="mr-[6px] ml-auto">
            <Icon w={8} h={6}><path d="M0.5 0.5L3 3L0.5 5.5M4.5 0.5L7 3L4.5 5.5" strokeWidth="1.4"/></Icon>
          </button>
        </div>
        <div className="flex min-h-0 flex-1">
          <IconStrip/>
          <Panels/>
        </div>
      </aside>
    </div>
  </div>
);

export default App;
